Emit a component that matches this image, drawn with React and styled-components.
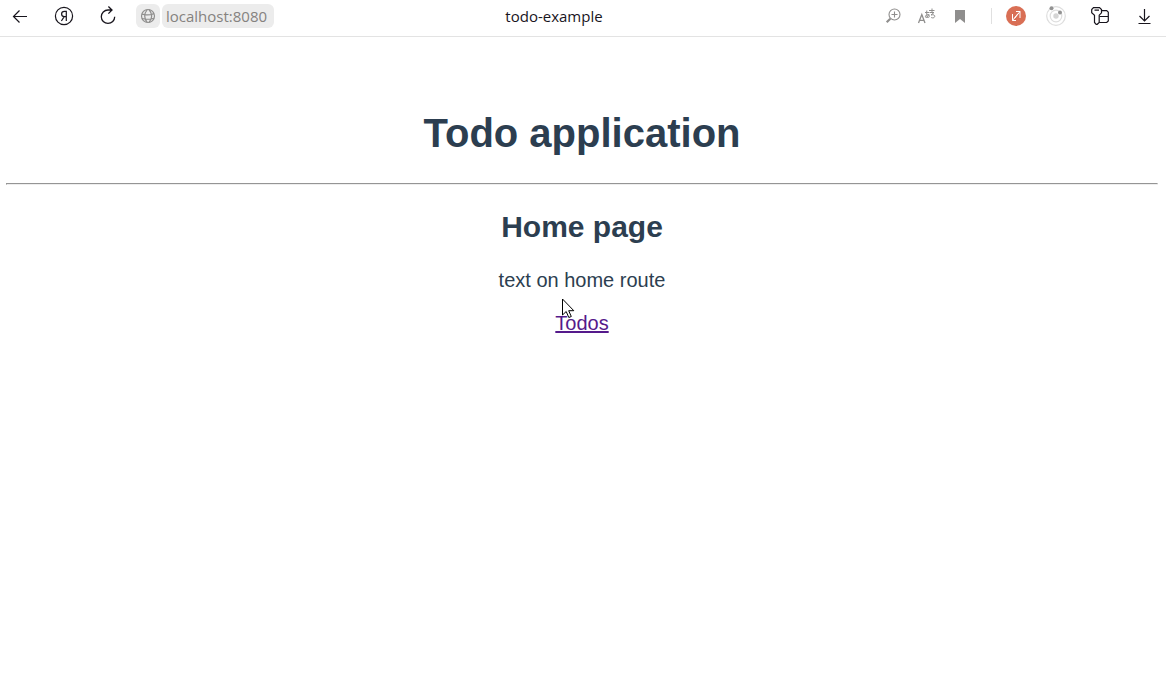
import React from "react";
import styled, { createGlobalStyle } from "styled-components";

const GlobalStyle = createGlobalStyle`
  body {
    margin: 0;
    background: #fff;
  }
`;

const Toolbar = styled.header`
  display: grid;
  grid-template-columns: auto 1fr auto;
  align-items: center;
  box-sizing: border-box;
  height: 37px;
  padding: 0 10px 4px 8px;
  border-bottom: 1px solid #e3e3e3;
  font-family: "Open Sans", "Noto Sans", sans-serif;
  font-size: 15px;
`;

const Group = styled.div`
  display: flex;
  align-items: center;
  gap: ${(p) => p.$gap}px;
`;

const IconButton = styled.button`
  display: flex;
  align-items: center;
  justify-content: center;
  width: 24px;
  height: 24px;
  padding: 0;
  border: 0;
  border-radius: 6px;
  background: ${(p) => (p.$filled ? "#ececec" : "transparent")};
  color: ${(p) => (p.$muted ? "#8f8e8d" : "#18151d")};

  svg {
    display: block;
    flex: none;
  }
`;

const Address = styled.input`
  box-sizing: border-box;
  width: 112px;
  height: 24px;
  padding: 0 4px;
  border: 0;
  border-radius: 6px;
  background: #ececec;
  color: #85827f;
  font: inherit;
`;

const PageTitle = styled.div`
  padding-right: 46px;
  color: #18151d;
  line-height: 24px;
  text-align: center;
`;

const Divider = styled.span`
  width: 1px;
  height: 16px;
  background: #e0e0e0;
`;

const Page = styled.main`
  padding: 73px 8px 0 6px;
  color: #2c3e50;
  font-family: "Liberation Sans", Arial, sans-serif;
  font-size: 20px;
  text-align: center;
`;

const Heading = styled.h1`
  margin: 0 0 27px;
  font-size: 40px;
  line-height: 46px;
`;

const Rule = styled.hr`
  margin: 0;
  border: 1px solid;
  border-color: #959595 #eee #eee #959595;
`;

const Subheading = styled.h2`
  margin: 25px 0;
  font-size: 30px;
  line-height: 34px;
`;

const Text = styled.p`
  margin: 0 0 20px;
  line-height: 23px;
`;

const LinkSpot = styled.span`
  position: relative;
  display: inline-block;
`;

const TodoLink = styled.a`
  color: #551a8b;
  line-height: 23px;
`;

const Pointer = styled.svg`
  position: absolute;
  left: 6px;
  top: -14px;
  pointer-events: none;
`;

const line = {
  fill: "none",
  stroke: "currentColor",
};

const BackIcon = () => (
  <svg width="24" height="24" {...line} strokeWidth="1.2">
    <path d="M19 12.5H5.5M11.5 6.5l-6 6 6 6" />
  </svg>
);

const YandexIcon = () => (
  <svg width="24" height="24" {...line} strokeWidth="1.2">
    <circle cx="12" cy="12" r="8.6" />
    <path d="M14.3 17V7.3h-1.8c-1.9 0-2.9 1-2.9 2.7 0 1.8 1.1 2.7 2.9 2.7h1.8M12.2 12.7L9.4 17" />
  </svg>
);

const ReloadIcon = () => (
  <svg width="24" height="24" {...line} strokeWidth="1.3">
    <path d="M15.5 6H12a6.7 6.7 0 1 0 6.7 6.7M12.4 2.5L16 6l-3.6 3.6" />
  </svg>
);

const GlobeIcon = () => (
  <svg width="24" height="24" {...line} strokeWidth="1.2">
    <circle cx="12" cy="12" r="6.5" />
    <path d="M5.8 10.2c4 1 8.8 .8 12.3-.6M6 14.5c4 1 8.5 1 12-.3M11.3 5.5c-3.2 4-3.2 9 0 13M13 5.5c3.3 4 3.3 9 0 13" />
  </svg>
);

const ZoomIcon = () => (
  <svg width="24" height="24" {...line} strokeWidth="1.1">
    <circle cx="14.5" cy="10.5" r="5.5" />
    <path d="M14.5 7.5v6M11.5 10.5h6" />
    <path d="M10.3 14.7l-3.6 3.6" strokeWidth="2.2" />
  </svg>
);

const TranslateIcon = () => (
  <svg width="24" height="24" {...line} strokeWidth="1">
    <path d="M4.5 19l3.3-8.5L11 19M5.6 16.3H10" strokeWidth="1.3" />
    <path d="M11 8.5h4.500M12.800 6.500c-.3 3 0 5 .7 7.300M15 10c-.7 2-1.700 3.500-2.800 3.500-1.300 0-1-2.400 1.200-2.900 2-.4 2.600 2.200 1 3.200" />
    <path d="M15 6.500h5.500M18 4.500v4M16 8.500h4l-3 2.500c2.500-.7 4.200 .2 3.700 1.700-.5 1.300-2.200 1.500-3.500 .8" />
  </svg>
);

const BookmarkIcon = () => (
  <svg width="24" height="24" fill="currentColor">
    <path d="M7 6h10v13l-5-4-5 4z" />
  </svg>
);

const LinkBadgeIcon = () => (
  <svg width="24" height="24" fill="none">
    <circle cx="12" cy="12" r="10" fill="#d96f55" />
    <path
      d="M8.5 10v6.5H12M8.500 16.500L14 9.500M12 7.500h4v6.500M16 7.500L10.500 14.500"
      stroke="#fff"
      strokeWidth="1"
    />
  </svg>
);

const OrbitIcon = () => (
  <svg width="24" height="24" fill="none">
    <g stroke="#dedede" strokeWidth="1.2">
      <circle cx="12" cy="12" r="9.3" />
      <circle cx="12" cy="12" r="5.8" />
    </g>
    <circle cx="12" cy="12" r="2.7" fill="#d5d5d5" />
    <circle cx="7.5" cy="4.2" r="2" fill="#929292" />
    <circle cx="16" cy="8.5" r="2" fill="#929292" />
  </svg>
);

const KeysIcon = () => (
  <svg width="24" height="24" {...line} strokeWidth="1.2">
    <path d="M5.5 3.6h6l2 2v3.2l-2.3 2.4v7.3L9.2 20.3h-1l-1.7-1.8v-7.3L3.7 8.8V5.6z" />
    <path d="M6.5 6.2H11M13.5 6.6h5.2l1.600 1.600v8.700l-1.600 1.600H11.200M11.500 12.500h8.800" />
  </svg>
);

const DownloadIcon = () => (
  <svg width="24" height="24" {...line} strokeWidth="1.2">
    <path d="M12.5 5v12M7.5 12l5 5 5-5M6.500 19.500h12" />
  </svg>
);

export default function App() {
  return (
    <>
      <GlobalStyle />
      <Toolbar>
        <Group $gap={16}>
          <Group $gap={20}>
            <IconButton aria-label="Back"><BackIcon /></IconButton>
            <IconButton aria-label="Yandex"><YandexIcon /></IconButton>
            <IconButton aria-label="Reload"><ReloadIcon /></IconButton>
          </Group>
          <Group $gap={2}>
            <IconButton $filled $muted aria-label="Site information">
              <GlobeIcon />
            </IconButton>
            <Address aria-label="Address" defaultValue="localhost:8080" />
          </Group>
        </Group>
        <PageTitle>todo-example</PageTitle>
        <Group $gap={20}>
          <Group $gap={12}>
            <Group $gap={19}>
              <Group $gap={10}>
                <IconButton $muted aria-label="Zoom"><ZoomIcon /></IconButton>
                <IconButton $muted aria-label="Translate"><TranslateIcon /></IconButton>
                <IconButton $muted aria-label="Bookmark"><BookmarkIcon /></IconButton>
              </Group>
              <Divider />
            </Group>
            <Group $gap={16}>
              <IconButton aria-label="Link extension"><LinkBadgeIcon /></IconButton>
              <IconButton aria-label="Orbit extension"><OrbitIcon /></IconButton>
            </Group>
          </Group>
          <IconButton aria-label="Passwords"><KeysIcon /></IconButton>
          <IconButton aria-label="Downloads"><DownloadIcon /></IconButton>
        </Group>
      </Toolbar>
      <Page>
        <Heading>Todo application</Heading>
        <Rule />
        <Subheading>Home page</Subheading>
        <Text>text on home route</Text>
        <LinkSpot>
          <TodoLink href="#todos">Todos</TodoLink>
          <Pointer width="14" height="22" aria-hidden="true">
            <path
              d="M1.5 1v16l3.7-3.5 2.6 6 2.5-1-2.6-5.8h5.1z"
              fill="#fff"
              stroke="#000"
            />
          </Pointer>
        </LinkSpot>
      </Page>
    </>
  );
}
